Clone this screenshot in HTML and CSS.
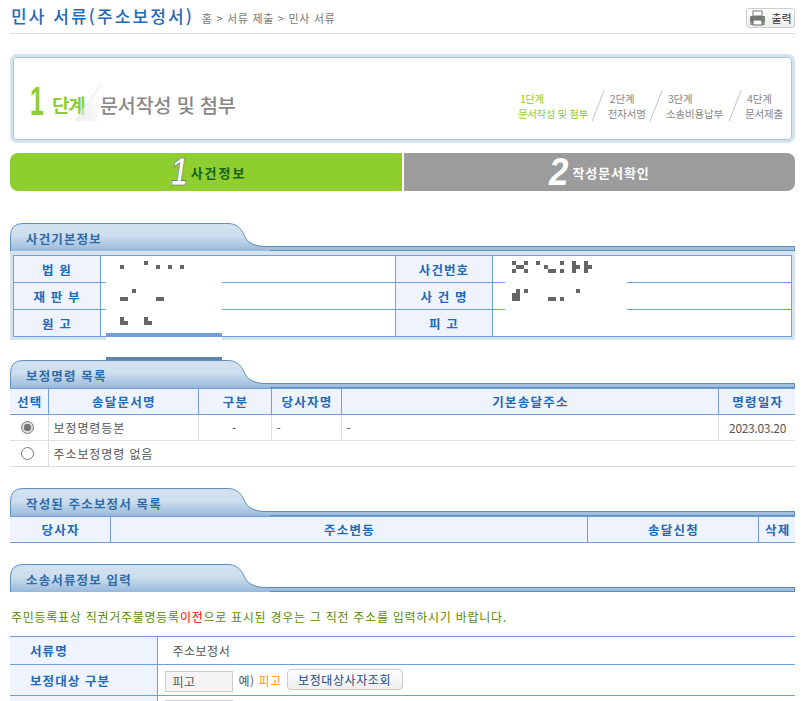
FILE: index.html
```html
<!DOCTYPE html>
<html lang="ko">
<head>
<meta charset="utf-8">
<title>민사 서류</title>
<link rel="stylesheet" href="styles.css">
</head>
<body>
<div class="page">
  <header class="top">
    <h1 class="title">민사 서류(주소보정서)</h1>
    <span class="crumb">홈 &gt; 서류 제출 &gt; 민사 서류</span>
    <button class="print" type="button">
      <svg width="17" height="16" viewBox="0 0 17 16"><rect x="4" y="1" width="9" height="5" fill="#fff" stroke="#777"/><rect x="1" y="6" width="15" height="6" rx="1" fill="#777"/><rect x="1" y="12" width="15" height="3" fill="#999"/><rect x="4" y="10" width="9" height="5" fill="#fff" stroke="#666"/><rect x="13" y="8" width="2" height="1" fill="#7c5"/></svg>
      <span>출력</span>
    </button>
  </header>

  <section class="stepbox">
    <div class="cur">
      <span class="cur-num">1</span>
      <span class="cur-word">단계</span>
      <svg class="fold" width="26" height="38" viewBox="0 0 26 38"><defs><linearGradient id="fg" x1="1" y1="0" x2="0" y2="1"><stop offset="0" stop-color="#fff"/><stop offset="1" stop-color="#e2e2e2"/></linearGradient></defs><path d="M26 0 L0 37 L22 37 Z" fill="url(#fg)" opacity=".6"/><path d="M26 0 L0 37" stroke="#e6e6e6" fill="none"/></svg>
      <span class="cur-name">문서작성 및 첨부</span>
    </div>
    <ol class="steps">
      <li class="step on"><b>1단계</b><span>문서작성 및 첨부</span></li>
      <li class="slash"><svg width="14" height="32" viewBox="0 0 14 32"><path d="M13 0.5 L1 31.5" stroke="#c4c4c4" fill="none"/></svg></li>
      <li class="step"><b>2단계</b><span>전자서명</span></li>
      <li class="slash"><svg width="14" height="32" viewBox="0 0 14 32"><path d="M13 0.5 L1 31.5" stroke="#c4c4c4" fill="none"/></svg></li>
      <li class="step"><b>3단계</b><span>소송비용납부</span></li>
      <li class="slash"><svg width="14" height="32" viewBox="0 0 14 32"><path d="M13 0.5 L1 31.5" stroke="#c4c4c4" fill="none"/></svg></li>
      <li class="step"><b>4단계</b><span>문서제출</span></li>
    </ol>
  </section>

  <nav class="tabs">
    <div class="tab tab-on"><i class="num">1</i><span>사건정보</span></div>
    <div class="tab tab-off"><i class="num">2</i><span>작성문서확인</span></div>
  </nav>

  <section class="sec sec-1">
    <div class="sec-head">
      <svg class="sec-tab" width="260" height="28" viewBox="0 0 260 28"><defs><linearGradient id="tg1" x1="0" y1="0" x2="0" y2="1"><stop offset="0" stop-color="#d3e2f0"/><stop offset=".45" stop-color="#cddeee"/><stop offset="1" stop-color="#98b9dc"/></linearGradient></defs><path d="M.5 28 V13 Q.5 .5 13 .5 H218 C226 .5 231 5 234 12 C237 20 245 23.5 256 23.5 H260 V28 Z" fill="url(#tg1)"/><path d="M.5 28 V13 Q.5 .5 13 .5 H218 C226 .5 231 5 234 12 C237 20 245 23.5 256 23.5 H260" fill="none" stroke="#5f8dba"/></svg>
      <h2>사건기본정보</h2>
    </div>
    <div class="info-wrap">
      <table class="info">
        <colgroup><col class="c87"><col class="c295"><col class="c97"><col></colgroup>
        <tr><th>법 원</th><td></td><th>사건번호</th><td></td></tr>
        <tr><th>재 판 부</th><td></td><th>사 건 명</th><td></td></tr>
        <tr><th>원 고</th><td></td><th>피 고</th><td></td></tr>
      </table>
    </div>
  </section>

  <section class="sec sec-2">
    <div class="sec-head">
      <svg class="sec-tab" width="260" height="28" viewBox="0 0 260 28"><path d="M.5 28 V13 Q.5 .5 13 .5 H218 C226 .5 231 5 234 12 C237 20 245 23.5 256 23.5 H260 V28 Z" fill="url(#tg1)"/><path d="M.5 28 V13 Q.5 .5 13 .5 H218 C226 .5 231 5 234 12 C237 20 245 23.5 256 23.5 H260" fill="none" stroke="#5f8dba"/></svg>
      <h2>보정명령 목록</h2>
    </div>
    <table class="list">
      <colgroup><col class="c38"><col class="c150"><col class="c73"><col class="c70"><col class="c377"><col></colgroup>
      <tr><th>선택</th><th>송달문서명</th><th>구분</th><th>당사자명</th><th>기본송달주소</th><th>명령일자</th></tr>
      <tr><td class="ctr"><input class="radio" type="radio" name="r" checked></td><td>보정명령등본</td><td class="ctr">-</td><td>-</td><td>-</td><td class="date">2023.03.20</td></tr>
      <tr><td class="ctr"><input class="radio" type="radio" name="r"></td><td colspan="5">주소보정명령 없음</td></tr>
    </table>
  </section>

  <section class="sec sec-3">
    <div class="sec-head">
      <svg class="sec-tab" width="260" height="28" viewBox="0 0 260 28"><path d="M.5 28 V13 Q.5 .5 13 .5 H218 C226 .5 231 5 234 12 C237 20 245 23.5 256 23.5 H260 V28 Z" fill="url(#tg1)"/><path d="M.5 28 V13 Q.5 .5 13 .5 H218 C226 .5 231 5 234 12 C237 20 245 23.5 256 23.5 H260" fill="none" stroke="#5f8dba"/></svg>
      <h2>작성된 주소보정서 목록</h2>
    </div>
    <table class="list">
      <colgroup><col class="c100"><col class="c477"><col class="c171"><col></colgroup>
      <tr><th>당사자</th><th>주소변동</th><th>송달신청</th><th>삭제</th></tr>
    </table>
  </section>

  <section class="sec sec-4">
    <div class="sec-head">
      <svg class="sec-tab" width="260" height="28" viewBox="0 0 260 28"><path d="M.5 28 V13 Q.5 .5 13 .5 H218 C226 .5 231 5 234 12 C237 20 245 23.5 256 23.5 H260 V28 Z" fill="url(#tg1)"/><path d="M.5 28 V13 Q.5 .5 13 .5 H218 C226 .5 231 5 234 12 C237 20 245 23.5 256 23.5 H260" fill="none" stroke="#5f8dba"/></svg>
      <h2>소송서류정보 입력</h2>
    </div>
    <p class="notice">주민등록표상 직권거주불명등록<em>이전</em>으로 표시된 경우는 그 직전 주소를 입력하시기 바랍니다.</p>
    <table class="form">
      <colgroup><col class="c147"><col></colgroup>
      <tr class="r-a"><th>서류명</th><td class="pad">주소보정서</td></tr>
      <tr class="r-b"><th>보정대상 구분</th><td><div class="inline"><span class="fld">피고</span><span class="eg">예) <em>피고</em></span><button class="btn" type="button">보정대상사자조회</button></div></td></tr>
      <tr class="r-c"><th></th><td><span class="fld"></span></td></tr>
    </table>
  </section>

  <svg class="mask mask-a" width="116" height="103" viewBox="106 257 116 103">
    <rect x="106" y="257" width="116" height="76" fill="#fff"/>
    <rect x="106" y="333" width="116" height="4" fill="#6f9fe0"/>
    <rect x="106" y="337" width="116" height="20" fill="#fff"/>
    <rect x="106" y="357" width="116" height="3" fill="#5a87b0"/>
    <g fill="#666">
      <rect x="120" y="265" width="4" height="4"/><rect x="144" y="261" width="4" height="4"/><rect x="156" y="265" width="4" height="4"/><rect x="168" y="265" width="4" height="4"/><rect x="180" y="265" width="4" height="4"/>
      <rect x="132" y="289" width="4" height="4"/><rect x="120" y="297" width="8" height="4"/><rect x="156" y="297" width="8" height="4"/>
      <rect x="120" y="317" width="4" height="8"/><rect x="124" y="321" width="4" height="4"/><rect x="144" y="317" width="4" height="8"/><rect x="148" y="321" width="4" height="4"/>
    </g>
  </svg>
  <svg class="mask mask-b" width="122" height="56" viewBox="505 257 122 56">
    <rect x="505" y="257" width="122" height="56" fill="#fff"/>
    <g fill="#666">
      <rect x="512" y="261" width="4" height="4"/><rect x="524" y="261" width="4" height="4"/><rect x="516" y="265" width="8" height="4"/><rect x="512" y="269" width="4" height="4"/><rect x="524" y="269" width="4" height="4"/>
      <rect x="536" y="261" width="4" height="4"/><rect x="544" y="265" width="4" height="4"/><rect x="548" y="269" width="8" height="4"/>
      <rect x="560" y="261" width="4" height="4"/><rect x="560" y="269" width="4" height="4"/>
      <rect x="572" y="261" width="4" height="12"/><rect x="576" y="265" width="4" height="4"/><rect x="584" y="261" width="4" height="12"/><rect x="588" y="265" width="4" height="4"/>
      <rect x="512" y="293" width="8" height="8"/><rect x="516" y="289" width="4" height="4"/><rect x="524" y="289" width="4" height="4"/>
      <rect x="548" y="297" width="8" height="4"/><rect x="560" y="297" width="4" height="4"/><rect x="576" y="289" width="4" height="4"/>
    </g>
  </svg>
</div>
</body>
</html>
```
FILE: styles.css
```css
* { box-sizing: border-box; }
html, body { margin: 0; padding: 0; height: 701px; overflow: hidden; background: #fff; }
body { font-family: "Noto Sans CJK KR", "Noto Sans", sans-serif; font-size: 12px; color: #555; }
.page { position: relative; width: 803px; height: 701px; padding: 0 8px 0 10px; overflow: hidden; }

/* header */
.top { display: flex; align-items: center; height: 34px; border-bottom: 1px solid #ddd; padding-bottom: 2px; }
.title { margin: 0 0 0 1px; font-size: 17px; font-weight: 500; letter-spacing: 2.1px; line-height: 22px; color: #2268b8; }
.crumb { margin-left: 8px; margin-top: 5px; font-size: 11px; letter-spacing: .7px; color: #777; }
.print { margin-left: auto; display: flex; align-items: center; justify-content: center; gap: 5px; width: 49px; height: 20px; margin-bottom: -4px; padding: 0; border: 1px solid #ccc; border-radius: 3px; background: linear-gradient(#fff, #eee); font: inherit; font-size: 11px; color: #333; }

/* step box */
.stepbox { position: relative; display: flex; justify-content: space-between; align-items: flex-end; height: 89px; margin-top: 20px; border: 3px solid #d5e3ec; border-radius: 7px; box-shadow: inset 0 0 0 1px #a8c6d8; padding: 0 9px 19px 17px; background: #fff; }
.cur { display: flex; align-items: flex-end; height: 40px; margin-bottom: 0; }
.cur-num { font-family: "Liberation Sans", sans-serif; font-size: 40px; line-height: 40px; font-weight: 700; color: #8fce2f; transform: scaleX(.62); transform-origin: left; width: 22px; }
.cur-word { font-size: 19px; font-weight: 700; letter-spacing: -1.3px; line-height: 28px; color: #8fce2f; margin-bottom: 2px; width: 34px; }
.fold { margin: 0 0 -1px -11px; }
.cur-name { margin-left: -1px; font-size: 19.5px; font-weight: 500; letter-spacing: -.1px; line-height: 28px; color: #888; margin-bottom: 2px; }
.steps { display: flex; align-items: flex-end; gap: 3px; list-style: none; margin: 0; padding: 0; }
.step { display: flex; flex-direction: column; font-size: 10.5px; line-height: 15px; color: #888; letter-spacing: -.15px; white-space: nowrap; }
.step b { font-weight: 400; padding-left: 2px; }
.step.on { color: #8fce2f; letter-spacing: -.4px; }
.step:nth-child(1), .step:nth-child(3) { margin-right: -2px; }
.slash { display: flex; margin: 0 0 -1px 2px; }

/* big tabs */
.tabs { display: flex; gap: 2px; margin-top: 10px; height: 38px; }
.tab { display: flex; align-items: center; justify-content: center; font-weight: 700; font-size: 13px; }
.tab-on { flex: 0 0 392px; background: #8fce2f; color: #17601c; border-radius: 8px 0 0 8px; padding-left: 5px; letter-spacing: 2px; }
.tab-off { flex: 1; background: #9c9c9c; color: #fff; border-radius: 0 8px 8px 0; letter-spacing: .9px; }
.num { display: inline-block; font-family: "Liberation Sans", sans-serif; font-size: 38px; line-height: 38px; font-weight: 700; font-style: italic; color: #fff; letter-spacing: 0; transform-origin: left; }
.tab-on .num { -webkit-text-stroke: .6px #555; margin-right: -1px; transform: scaleX(.78); }
.tab-off .num { margin-right: 2px; transform: scaleX(.92); }

/* sections */
.sec { position: relative; }
.sec-1 { margin-top: 32px; }
.sec-2 { margin-top: 20px; }
.sec-3 { margin-top: 21px; }
.sec-4 { margin-top: 21px; }
.sec-head { position: relative; height: 28px; background: linear-gradient(#5f8dba, #5f8dba) no-repeat 100% 100% / 1px 4px, linear-gradient(#5f8dba 0 1px, #a0bfdf 1px) no-repeat 0 100% / 100% 4px; border-bottom: 1px solid #5f8dba; }
.sec-tab { position: absolute; left: 0; top: 0; }
.sec-head h2 { position: relative; margin: 0; padding: 7px 0 0 16px; font-size: 12.5px; line-height: 17px; font-weight: 700; letter-spacing: 1.15px; color: #2f6aa8; }

/* basic info */
.info-wrap { background: #d5e3ec; padding: 4px 3px 3px; height: 89px; }
.info { width: 100%; height: 82px; table-layout: fixed; border-collapse: collapse; border: 1px solid #6f9fe0; background: #fff; }
.info th, .info td { border: 1px solid #6f9fe0; height: 27px; padding: 0; }
.info th { background: #eff4fc; color: #2268b8; font-weight: 700; font-size: 12.5px; letter-spacing: 1.1px; }
.c87 { width: 87px; } .c295 { width: 295px; } .c97 { width: 97px; }
.c38 { width: 38px; } .c150 { width: 150px; } .c73 { width: 73px; } .c70 { width: 70px; } .c377 { width: 377px; }
.c100 { width: 100px; } .c477 { width: 477px; } .c171 { width: 171px; } .c147 { width: 147px; }

/* lists */
.list { width: 100%; table-layout: fixed; border-collapse: collapse; border-top: 1px solid #6f9fe0; }
.list th { height: 26px; padding: 0 0 0 2px; background: #eff4fc; color: #2268b8; font-weight: 700; font-size: 12.5px; letter-spacing: 1.25px; border-left: 1px solid #6f9fe0; border-bottom: 1px solid #6f9fe0; }
.list th:first-child { border-left: 0; }
.list td { height: 26px; padding: 0 0 0 5px; font-size: 12px; letter-spacing: .9px; color: #555; border-left: 1px solid #ddd; border-bottom: 1px solid #ddd; }
.list td:first-child { border-left: 0; }
.list td.ctr { padding: 0; text-align: center; }
.list td.date { padding: 0 9px 0 0; text-align: right; letter-spacing: -.3px; }
.radio { appearance: none; display: block; width: 13px; height: 13px; margin: 0 0 0 11px; border: 1px solid #777; border-radius: 50%; background: #fff; }
.radio:checked { background: radial-gradient(circle, #777 0 3.5px, #ddd 4px); }

/* form */
.notice { margin: 0; padding: 16px 0 0 1px; height: 44px; font-size: 12px; line-height: 18px; letter-spacing: .73px; color: #5a8a00; white-space: nowrap; }
.notice em { font-style: normal; color: #f00; }
.form { width: 100%; table-layout: fixed; border-collapse: collapse; }
.form th { padding: 0 0 0 20px; text-align: left; background: #eff4fc; color: #2268b8; font-weight: 700; font-size: 12.5px; letter-spacing: 1.1px; border-top: 1px solid #6f9fe0; border-right: 1px solid #6f9fe0; }
.form td { padding: 0 0 0 7px; border-top: 1px solid #6f9fe0; font-size: 12px; letter-spacing: .5px; white-space: nowrap; }
.form td.pad { padding-left: 15px; }
.r-a th, .r-a td { height: 28px; }
.r-b th, .r-b td { height: 31px; }
.r-c th, .r-c td { height: 28px; vertical-align: top; padding-top: 4px; }
.inline { display: flex; align-items: center; }
.fld { display: inline-block; flex: none; width: 68px; height: 21px; padding-left: 7px; line-height: 20px; vertical-align: middle; background: #f5f5f5; border: 1px solid #ccc; color: #555; }
.inline .fld { margin-top: 3px; }
.eg { margin-left: 6px; }
.eg em { font-style: normal; color: #f90; }
.btn { margin-left: 5px; margin-bottom: 1px; width: 116px; height: 21px; padding: 0; border: 1px solid #ccc; border-radius: 4px; background: linear-gradient(#fff, #eee); font: inherit; font-size: 12px; letter-spacing: .6px; color: #1a4a86; }

/* redaction patches lying over the table */
.mask { position: absolute; display: block; }
.mask-a { left: 106px; top: 257px; }
.mask-b { left: 505px; top: 257px; }
```
